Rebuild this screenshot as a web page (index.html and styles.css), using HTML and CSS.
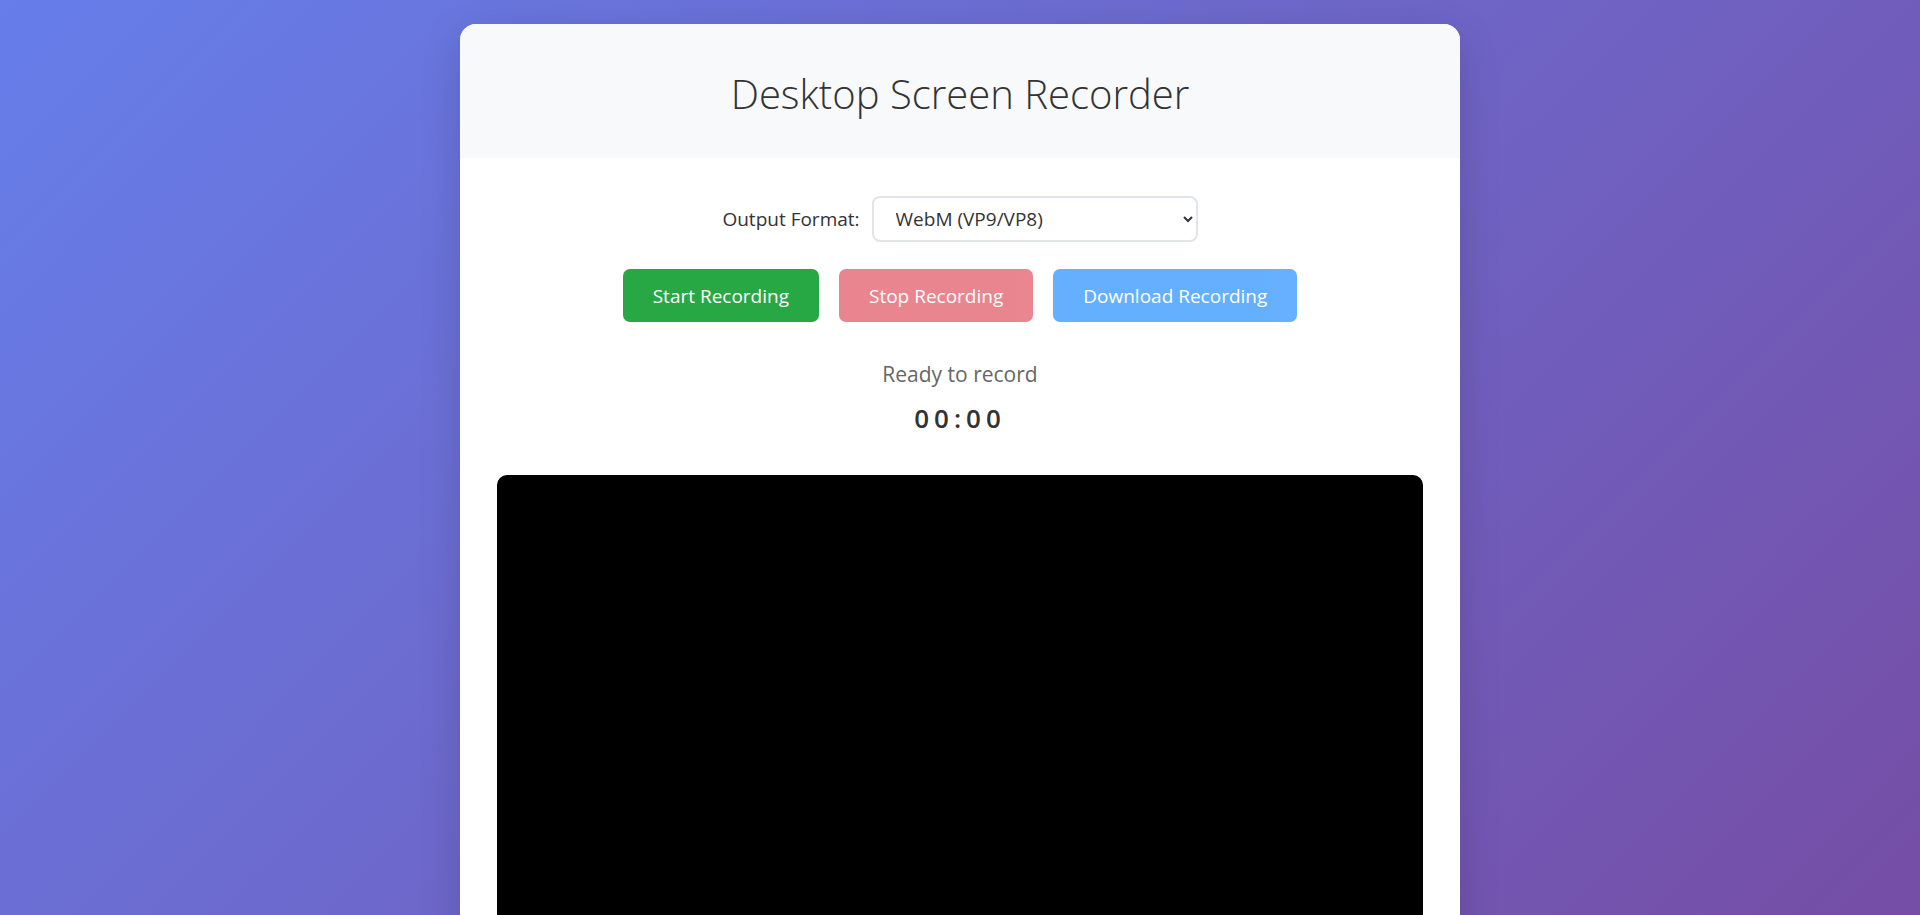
FILE: index.html
```html
<!DOCTYPE html>
<html lang="en">
  <head>
    <meta charset="UTF-8" />
    <meta name="viewport" content="width=device-width, initial-scale=1.0" />
    <title>Desktop Screen Recorder</title>
    <link rel="stylesheet" href="styles.css">
  </head>

  <body>
    <div class="container">
      <header class="header">
        <h1>Desktop Screen Recorder</h1>
      </header>

      <main class="content">
        <div class="format-row">
          <label for="format">Output Format:</label>
          <select id="format" name="format">
            <option value="webm">WebM (VP9/VP8)</option>
            <option value="mp4">MP4 (H.264)</option>
          </select>
        </div>

        <div class="controls">
          <button type="button" class="btn btn-start">Start Recording</button>
          <button type="button" class="btn btn-stop" disabled>Stop Recording</button>
          <button type="button" class="btn btn-download" disabled>Download Recording</button>
        </div>

        <div class="status">Ready to record</div>
        <div class="timer">00:00</div>

        <div class="preview"></div>
      </main>
    </div>
  </body>
</html>
```

FILE: styles.css
```css
body {
  margin: 0;
  padding: 24px 20px;
  min-height: 100vh;
  box-sizing: border-box;
  font-family: "Open Sans", "Noto Sans", sans-serif;
  background: linear-gradient(135deg, #667eea 0%, #764ba2 100%);
}

.container {
  max-width: 1000px;
  margin: 0 auto;
  background-color: #fff;
  border-radius: 16px;
  overflow: hidden;
  box-shadow: 0 12px 40px rgba(0, 0, 0, 0.15);
}

.header {
  background-color: #f8f9fa;
  height: 134px;
  padding-top: 4px;
  box-sizing: border-box;
  display: flex;
  align-items: center;
  justify-content: center;
}

.header h1 {
  margin: 0;
  font-size: 40px;
  font-weight: 300;
  color: #333;
}

.content {
  padding: 38px 37px;
  text-align: center;
}

.format-row {
  display: flex;
  align-items: center;
  justify-content: center;
  gap: 12px;
}

.format-row label {
  font-size: 19px;
  color: #333;
}

.format-row select {
  width: 326px;
  height: 46px;
  padding: 0 14px 0 18px;
  font-family: inherit;
  font-size: 19px;
  color: #333;
  background-color: #fff;
  border: 2px solid #e1e5e9;
  border-radius: 8px;
}

.controls {
  display: flex;
  justify-content: center;
  gap: 20px;
  margin-top: 27px;
}

.btn {
  height: 53px;
  padding: 0 30px;
  border: none;
  border-radius: 7px;
  font-family: inherit;
  font-size: 19px;
  color: #fff;
  cursor: pointer;
}

.btn-start {
  background-color: #28a745;
}

.btn-stop {
  background-color: #dc3545;
  opacity: 0.6;
}

.btn-download {
  background-color: #007bff;
  opacity: 0.6;
}

.btn:disabled {
  cursor: not-allowed;
}

.status {
  margin-top: 38px;
  font-size: 21px;
  color: #666;
}

.timer {
  margin-top: 12px;
  font-size: 26px;
  font-weight: 600;
  letter-spacing: 5px;
  color: #333;
}

.preview {
  margin-top: 39px;
  aspect-ratio: 16 / 9;
  background-color: #000;
  border-radius: 10px;
}
```
